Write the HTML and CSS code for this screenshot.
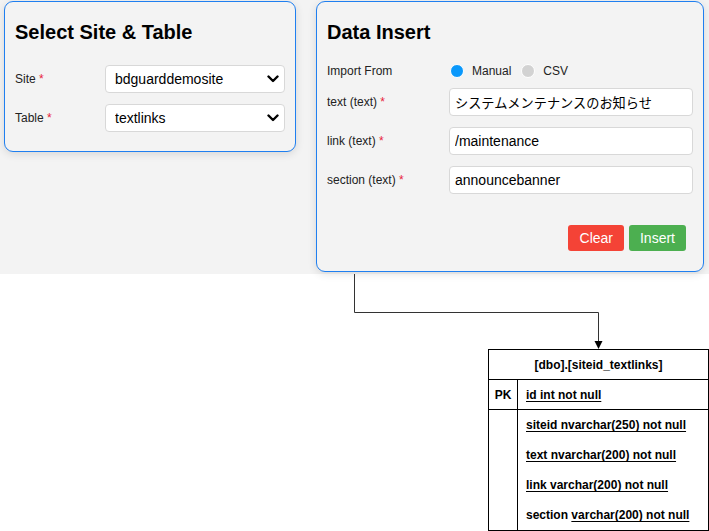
FILE: index.html
```html
<!DOCTYPE html>
<html lang="en">
<head>
<meta charset="utf-8">
<title>Data Insert</title>
<link rel="stylesheet" href="styles.css">
</head>
<body>
<div class="top">
  <section class="card card-left">
    <h2 class="card-title">Select Site &amp; Table</h2>
    <div class="row row-site">
      <label class="label">Site <span class="req">*</span></label>
      <div class="select-wrap">
        <select class="select"><option>bdguarddemosite</option></select>
        <svg class="chev" width="12" height="8" viewBox="0 0 12 8"><path d="M1.5 1.5 L6 6 L10.5 1.5" fill="none" stroke="#000" stroke-width="2.4" stroke-linecap="round" stroke-linejoin="round"/></svg>
      </div>
    </div>
    <div class="row">
      <label class="label">Table <span class="req">*</span></label>
      <div class="select-wrap">
        <select class="select"><option>textlinks</option></select>
        <svg class="chev" width="12" height="8" viewBox="0 0 12 8"><path d="M1.5 1.5 L6 6 L10.5 1.5" fill="none" stroke="#000" stroke-width="2.4" stroke-linecap="round" stroke-linejoin="round"/></svg>
      </div>
    </div>
  </section>

  <section class="card card-right">
    <h2 class="card-title">Data Insert</h2>
    <div class="irow import-row">
      <span class="ilabel">Import From</span>
      <div class="radios">
        <span class="radio radio-on"></span><span class="rtext">Manual</span>
        <span class="radio radio-off"></span><span class="rtext">CSV</span>
      </div>
    </div>
    <div class="irow">
      <span class="ilabel">text (text) <span class="req">*</span></span>
      <input class="input jp" value="システムメンテナンスのお知らせ">
    </div>
    <div class="irow">
      <span class="ilabel">link (text) <span class="req">*</span></span>
      <input class="input" value="/maintenance">
    </div>
    <div class="irow">
      <span class="ilabel">section (text) <span class="req">*</span></span>
      <input class="input" value="announcebanner">
    </div>
    <div class="actions">
      <button class="btn btn-clear">Clear</button>
      <button class="btn btn-insert">Insert</button>
    </div>
  </section>
</div>

<div class="diagram">
  <svg class="connector" width="709" height="80" viewBox="0 0 709 80">
    <path d="M354.5 0 V38.5 H598.5 V68" fill="none" stroke="#333" stroke-width="1"/>
    <path d="M594.5 67 L602.5 67 L598.5 75 Z" fill="#000"/>
  </svg>
  <div class="erd">
    <div class="erd-head">[dbo].[siteid_textlinks]</div>
    <div class="erd-pk">
      <div class="erd-key">PK</div>
      <div class="erd-fields"><div class="erd-f"><u>id int not null</u></div></div>
    </div>
    <div class="erd-body">
      <div class="erd-key"></div>
      <div class="erd-fields">
        <div class="erd-f"><u>siteid nvarchar(250) not null</u></div>
        <div class="erd-f"><u>text nvarchar(200) not null</u></div>
        <div class="erd-f"><u>link varchar(200) not null</u></div>
        <div class="erd-f">section <u>varchar(200) not null</u></div>
      </div>
    </div>
  </div>
</div>
</body>
</html>
```

FILE: styles.css
```css
* { box-sizing: border-box; }
html, body { margin: 0; padding: 0; background: #fff; }
body {
  font-family: "Liberation Sans", Arial, "Noto Sans CJK JP", sans-serif;
  color: #111;
  width: 709px;
  height: 531px;
  overflow: hidden;
}
.top {
  background: #f3f3f3;
  height: 274px;
  display: flex;
  align-items: flex-start;
  gap: 20px;
  padding: 1px 5px 0 4px;
}
.card {
  background: #f3f3f3;
  border: 1px solid #1f7ff0;
  border-radius: 9px;
  box-shadow: 0 2px 8px rgba(0,0,0,0.12);
  padding: 10px 10px 19px 10px;
}
.card-left { width: 293px; }
.card-right { width: 388px; padding-bottom: 20px; }
.card-title {
  font-size: 20px;
  line-height: 23px;
  font-weight: bold;
  margin: 9px 0 21px 0;
  color: #000;
}
.row {
  display: flex;
  align-items: center;
  height: 28px;
}
.row-site { margin-bottom: 11px; }
.label {
  width: 90px;
  font-size: 12px;
  color: #222;
}
.req { color: #e8223a; }
.select-wrap {
  position: relative;
  width: 180px;
  height: 28px;
}
.select {
  appearance: none;
  -webkit-appearance: none;
  width: 100%;
  height: 28px;
  border: 1px solid #d8d8d8;
  border-radius: 4px;
  background: #fff;
  font-family: "Liberation Sans", Arial, sans-serif;
  font-size: 14px;
  color: #000;
  padding: 0 0 0 9px;
}
.chev {
  position: absolute;
  right: 6px;
  top: 10px;
  pointer-events: none;
}
.card-right .card-title { margin-bottom: 17px; }
.irow {
  display: flex;
  align-items: center;
  height: 28px;
  margin-bottom: 11px;
}
.import-row { height: 20px; margin-bottom: 7px; }
.ilabel {
  width: 122px;
  font-size: 12px;
  color: #222;
}
.radios {
  display: flex;
  align-items: center;
  font-size: 12px;
  color: #222;
}
.radio {
  display: inline-block;
  width: 14px;
  height: 14px;
  border-radius: 50%;
  border: 1px solid #fff;
}
.radio-on { background: #0a98fb; margin-left: 1px; }
.radio-off { background: #d2d2d2; margin-left: 0; }
.rtext { margin-left: 8px; margin-right: 10px; }
.input {
  width: 244px;
  height: 28px;
  border: 1px solid #d8d8d8;
  border-radius: 4px;
  background: #fff;
  font-family: "Liberation Sans", Arial, "Noto Sans CJK JP", sans-serif;
  font-size: 14px;
  color: #000;
  padding: 0 0 0 5px;
}
.input.jp { font-family: "Noto Sans CJK JP", sans-serif; font-size: 13.2px; }
.actions {
  display: flex;
  justify-content: flex-end;
  gap: 5px;
  margin-top: 31px;
  margin-right: 7px;
}
.btn {
  height: 26px;
  border: none;
  border-radius: 3px;
  color: #fff;
  font-family: "Liberation Sans", Arial, sans-serif;
  font-size: 14px;
  padding: 0 11px;
}
.btn-clear { background: #f44336; padding: 0 11px 0 12px; }
.btn-insert { background: #4caf50; }

.diagram {
  position: relative;
  height: 257px;
}
.connector {
  position: absolute;
  left: 0;
  top: 0;
}
.erd {
  position: absolute;
  left: 488px;
  top: 75px;
  width: 221px;
  height: 182px;
  border: 1px solid #000;
  font-size: 12px;
  font-weight: bold;
  color: #000;
  display: flex;
  flex-direction: column;
}
.erd-head {
  height: 31px;
  border-bottom: 1px solid #000;
  display: flex;
  align-items: center;
  justify-content: center;
}
.erd-pk {
  display: flex;
  height: 30px;
  border-bottom: 1px solid #000;
}
.erd-body { display: flex; flex: 1; }
.erd-key {
  width: 29px;
  border-right: 1px solid #000;
  display: flex;
  align-items: center;
  justify-content: center;
}
.erd-fields {
  flex: 1;
  padding-left: 8px;
}
.erd-f {
  height: 30px;
  line-height: 30px;
  white-space: nowrap;
}
.erd-f u { text-underline-offset: 2px; }
```
